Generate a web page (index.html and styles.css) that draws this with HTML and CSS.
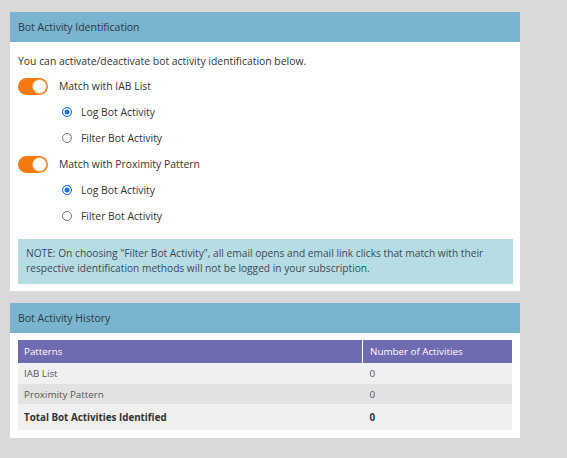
FILE: index.html
```html
<!DOCTYPE html>
<html>
<head>
<meta charset="utf-8">
<link rel="stylesheet" href="styles.css">
</head>
<body>
<div class="page">
  <section class="panel">
    <div class="panel-head">Bot Activity Identification</div>
    <div class="panel-body">
      <p class="intro">You can activate/deactivate bot activity identification below.</p>
      <div class="row toggle-row"><span class="toggle"><span class="knob"></span></span><span>Match with IAB List</span></div>
      <div class="row radio-row"><span class="radio checked"></span><span>Log Bot Activity</span></div>
      <div class="row radio-row"><span class="radio"></span><span>Filter Bot Activity</span></div>
      <div class="row toggle-row"><span class="toggle"><span class="knob"></span></span><span>Match with Proximity Pattern</span></div>
      <div class="row radio-row"><span class="radio checked"></span><span>Log Bot Activity</span></div>
      <div class="row radio-row"><span class="radio"></span><span>Filter Bot Activity</span></div>
      <div class="note">NOTE: On choosing "Filter Bot Activity", all email opens and email link clicks that match with their respective identification methods will not be logged in your subscription.</div>
    </div>
  </section>
  <section class="panel">
    <div class="panel-head">Bot Activity History</div>
    <div class="panel-body history">
      <table class="tbl">
        <thead>
          <tr><th class="c1">Patterns</th><th class="c2">Number of Activities</th></tr>
        </thead>
        <tbody>
          <tr class="r1"><td>IAB List</td><td>0</td></tr>
          <tr class="r2"><td>Proximity Pattern</td><td>0</td></tr>
          <tr class="r3 total"><td>Total Bot Activities Identified</td><td>0</td></tr>
        </tbody>
      </table>
    </div>
  </section>
</div>
</body>
</html>
```

FILE: styles.css
```css
html, body { margin: 0; padding: 0; }
body {
  background: #d9d9d9;
  font-family: "Open Sans", "Liberation Sans", sans-serif;
  color: #333;
  width: 567px;
  height: 458px;
  overflow: hidden;
}
.page {
  padding: 12px 0 0 10px;
  display: flex;
  flex-direction: column;
  gap: 12px;
}
.panel {
  width: 510px;
  background: #fff;
}
.panel-head {
  height: 30px;
  background: #7ab4cf;
  color: #2a3a45;
  font-size: 10.5px;
  line-height: 30px;
  padding-left: 8px;
}
.panel-body {
  padding: 9px 7px 7px 8px;
  font-size: 10.4px;
}
.intro {
  margin: 0 0 2px;
  line-height: 20px;
}
.row {
  height: 26px;
  display: flex;
  align-items: center;
}
.toggle-row span:last-child { margin-left: 11px; }
.toggle {
  width: 30px;
  height: 17px;
  border-radius: 9px;
  background: #f47a10;
  position: relative;
  display: block;
  flex: none;
}
.knob {
  position: absolute;
  right: 1px;
  top: 1px;
  width: 13px;
  height: 13px;
  border-radius: 50%;
  background: #fff;
  border: 1px solid #f8a35a;
}
.radio-row { padding-left: 44px; }
.radio {
  width: 8px;
  height: 8px;
  border-radius: 50%;
  border: 1px solid #777;
  margin-right: 9px;
  flex: none;
  background: #fff;
}
.radio.checked {
  border-color: #1a73e8;
  background: #1a73e8;
  box-shadow: inset 0 0 0 1.5px #fff;
}
.note {
  margin-top: 10px;
  background: #b7dde4;
  font-size: 10.2px;
  line-height: 15px;
  padding: 7px 8px 8px;
  color: #3a4a55;
}
.history { padding: 7px 8px 8px 8px; }
.tbl {
  width: 494px;
  border-collapse: collapse;
  font-size: 9.8px;
}
.tbl th {
  background: #6f6bb0;
  color: #fff;
  font-weight: normal;
  text-align: left;
  height: 23px;
  padding: 0 6px;
}
.tbl th.c2 {
  border-left: 1px solid #fff;
  width: 136px;
  padding-left: 7px;
}
.tbl td { padding: 0 6px; color: #555; }
.tbl td:last-child { padding-left: 7px; }
.r1 td { background: #f0f0f0; height: 21px; }
.r2 td { background: #e2e2e2; height: 20px; }
.r3 td { background: #f0f0f0; height: 26px; }
.total td { font-weight: bold; color: #333; }
```
